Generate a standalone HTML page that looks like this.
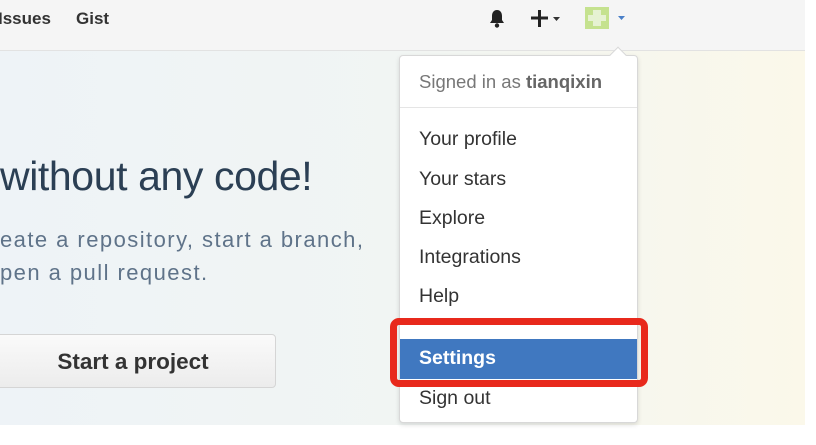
<!DOCTYPE html>
<html><head><style>
body{margin:0;width:816px;height:445px;overflow:hidden;position:relative;font-family:"Liberation Sans",sans-serif;background:#fff}
.hdr{position:absolute;left:0;top:0;width:805px;height:50px;background:#f5f5f5;border-bottom:1px solid #e2e2e2}
.hero{position:absolute;left:0;top:51px;width:805px;height:374px;background:linear-gradient(90deg,#eef3f7 0%,#f1f5f3 50%,#fbf8ea 100%)}
.nav{position:absolute;top:9px;font-size:17px;font-weight:bold;color:#333}
h1{position:absolute;left:0;top:153px;margin:0;font-size:41px;font-weight:normal;color:#2b3f54;letter-spacing:-0.4px}
.p{position:absolute;left:0;font-size:22px;color:#5f7389;letter-spacing:1.45px}
.btn{position:absolute;left:-10px;top:334px;width:286px;height:54px;border:1px solid #d5d5d5;border-radius:4px;background:linear-gradient(#fafafa,#ececec);font-size:22.5px;font-weight:bold;color:#333;text-align:center;line-height:54px;box-sizing:border-box}
.dd{position:absolute;left:399px;top:55px;width:239px;height:368px;background:#fff;border:1px solid #d8d8d8;border-radius:4px;box-shadow:0 2px 5px rgba(0,0,0,.12);box-sizing:border-box}
.it{position:absolute;left:19px;font-size:19.5px;color:#333}
</style></head><body>
<div class="hdr"></div>
<div class="nav" style="left:-2px">Issues</div>
<div class="nav" style="left:76px">Gist</div>
<svg style="position:absolute;left:487px;top:8px" width="20" height="22" viewBox="0 0 20 22"><path d="M10 2c-3.5 0-5 3-5 6v4l-2 3h14l-2-3V8c0-3-1.5-6-5-6z" fill="#222"/><circle cx="10" cy="17.5" r="2.2" fill="#222"/></svg>
<svg style="position:absolute;left:530px;top:7px" width="36" height="22"><path d="M1 11h17M9.5 3v17" stroke="#222" stroke-width="3"/><path d="M23 10l3.5 4 3.5-4z" fill="#333"/></svg>
<svg style="position:absolute;left:585px;top:7px" width="44" height="22"><rect x="0" y="0" width="24" height="22" fill="#c5e28f"/><rect x="8" y="3" width="8" height="16" fill="#e6f2d2"/><rect x="3" y="8" width="18" height="6" fill="#e6f2d2"/><path d="M33 9l3.5 4 3.5-4z" fill="#4a7fc8"/></svg>
<div class="hero"></div>
<h1>without any code!</h1>
<div class="p" style="top:227px">eate a repository, start a branch,</div>
<div class="p" style="top:260px">pen a pull request.</div>
<div class="btn">Start a project</div>
<div class="dd">
<div style="position:absolute;left:212px;top:-7px;width:11px;height:11px;background:#fff;border-left:1px solid #d8d8d8;border-top:1px solid #d8d8d8;transform:rotate(45deg)"></div>
<div class="it" style="top:15px;color:#777;font-size:18.5px">Signed in as <b style="color:#666">tianqixin</b></div>
<div style="position:absolute;left:0;right:0;top:51px;border-top:1px solid #e5e5e5"></div>
<div class="it" style="top:72px">Your profile</div>
<div class="it" style="top:112px">Your stars</div>
<div class="it" style="top:151px">Explore</div>
<div class="it" style="top:190px">Integrations</div>
<div class="it" style="top:229px">Help</div>
<div style="position:absolute;left:0;right:0;top:283px;height:40px;background:#4078c0"></div>
<div class="it" style="top:291px;color:#fff;font-weight:bold">Settings</div>
<div class="it" style="top:331px">Sign out</div>
</div>
<div style="position:absolute;left:390px;top:318px;width:258px;height:69px;border:7px solid #e8291c;border-radius:9px;box-sizing:border-box"></div>
</body></html>
